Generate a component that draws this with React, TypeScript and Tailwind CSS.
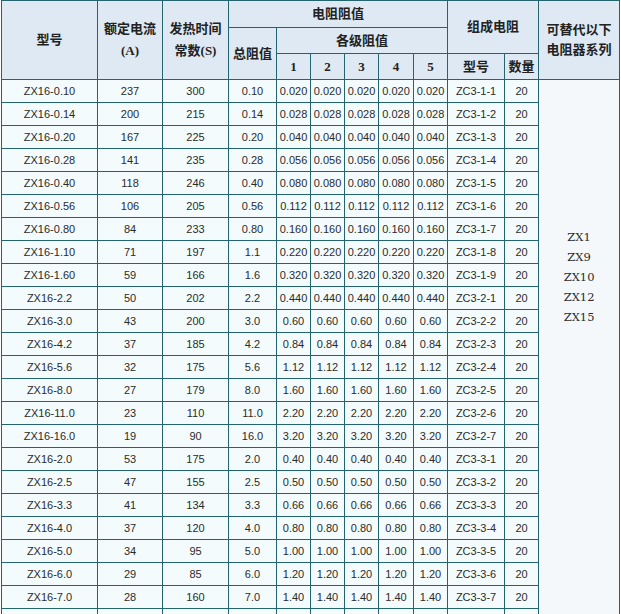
import React from "react";

type Row = [string, string, string, string, string, string, string];

const rows: Row[] = [
  ["ZX16-0.10", "237", "300", "0.10", "0.020", "ZC3-1-1", "20"],
  ["ZX16-0.14", "200", "215", "0.14", "0.028", "ZC3-1-2", "20"],
  ["ZX16-0.20", "167", "225", "0.20", "0.040", "ZC3-1-3", "20"],
  ["ZX16-0.28", "141", "235", "0.28", "0.056", "ZC3-1-4", "20"],
  ["ZX16-0.40", "118", "246", "0.40", "0.080", "ZC3-1-5", "20"],
  ["ZX16-0.56", "106", "205", "0.56", "0.112", "ZC3-1-6", "20"],
  ["ZX16-0.80", "84", "233", "0.80", "0.160", "ZC3-1-7", "20"],
  ["ZX16-1.10", "71", "197", "1.1", "0.220", "ZC3-1-8", "20"],
  ["ZX16-1.60", "59", "166", "1.6", "0.320", "ZC3-1-9", "20"],
  ["ZX16-2.2", "50", "202", "2.2", "0.440", "ZC3-2-1", "20"],
  ["ZX16-3.0", "43", "200", "3.0", "0.60", "ZC3-2-2", "20"],
  ["ZX16-4.2", "37", "185", "4.2", "0.84", "ZC3-2-3", "20"],
  ["ZX16-5.6", "32", "175", "5.6", "1.12", "ZC3-2-4", "20"],
  ["ZX16-8.0", "27", "179", "8.0", "1.60", "ZC3-2-5", "20"],
  ["ZX16-11.0", "23", "110", "11.0", "2.20", "ZC3-2-6", "20"],
  ["ZX16-16.0", "19", "90", "16.0", "3.20", "ZC3-2-7", "20"],
  ["ZX16-2.0", "53", "175", "2.0", "0.40", "ZC3-3-1", "20"],
  ["ZX16-2.5", "47", "155", "2.5", "0.50", "ZC3-3-2", "20"],
  ["ZX16-3.3", "41", "134", "3.3", "0.66", "ZC3-3-3", "20"],
  ["ZX16-4.0", "37", "120", "4.0", "0.80", "ZC3-3-4", "20"],
  ["ZX16-5.0", "34", "95", "5.0", "1.00", "ZC3-3-5", "20"],
  ["ZX16-6.0", "29", "85", "6.0", "1.20", "ZC3-3-6", "20"],
  ["ZX16-7.0", "28", "160", "7.0", "1.40", "ZC3-3-7", "20"],
  ["", "", "", "", "", "", ""],
];

const widths = [96, 65, 66, 48, 34, 34, 34, 35, 34, 57, 34, 81];

const th =
  "border border-[#23646f] bg-[#dfe9f3] text-center align-middle font-bold text-[13px] leading-[20px] text-[#222] p-0";
const td =
  "border border-[#23646f] bg-[#f3fbfd] text-center align-middle text-[11px] text-[#2b2b2b] p-0 whitespace-nowrap";

export default function App() {
  return (
    <div className="w-[621px] h-[614px] overflow-hidden bg-white pl-[1px]">
      <table
        className="border-collapse table-fixed w-[618px]"
        style={{ fontFamily: '"Liberation Serif", "Noto Sans CJK SC", serif' }}
      >
        <colgroup>
          {widths.map((w, i) => (
            <col key={i} style={{ width: w }} />
          ))}
        </colgroup>
        <thead>
          <tr className="h-[27px]">
            <th rowSpan={3} className={th}>
              型号
            </th>
            <th rowSpan={3} className={`${th} leading-[22px]`}>
              额定电流
              <br />
              (A)
            </th>
            <th rowSpan={3} className={`${th} leading-[22px]`}>
              发热时间
              <br />
              常数(S)
            </th>
            <th colSpan={6} className={th}>
              电阻阻值
            </th>
            <th colSpan={2} rowSpan={2} className={th}>
              组成电阻
            </th>
            <th rowSpan={3} className={th}>
              可替代以下
              <br />
              电阻器系列
            </th>
          </tr>
          <tr className="h-[26px]">
            <th rowSpan={2} className={th}>
              总阻值
            </th>
            <th colSpan={5} className={th}>
              各级阻值
            </th>
          </tr>
          <tr className="h-[26px]">
            {["1", "2", "3", "4", "5", "型号", "数量"].map((t) => (
              <th key={t} className={th}>
                {t}
              </th>
            ))}
          </tr>
        </thead>
        <tbody style={{ fontFamily: '"Liberation Sans", "Noto Sans CJK SC", sans-serif' }}>
          {rows.map((r, i) => (
            <tr key={i} className="h-[23px]">
              <td className={td}>{r[0]}</td>
              <td className={td}>{r[1]}</td>
              <td className={td}>{r[2]}</td>
              <td className={td}>{r[3]}</td>
              <td className={td}>{r[4]}</td>
              <td className={td}>{r[4]}</td>
              <td className={td}>{r[4]}</td>
              <td className={td}>{r[4]}</td>
              <td className={td}>{r[4]}</td>
              <td className={td}>{r[5]}</td>
              <td className={td}>{r[6]}</td>
              {i === 0 && (
                <td
                  rowSpan={rows.length}
                  className="border border-[#23646f] bg-[#f4f8fb] text-center align-top pt-[147px] text-[11.5px] leading-[20px] text-[#2b2b2b]"
                  style={{ fontFamily: '"DejaVu Serif", "Liberation Serif", serif' }}
                >
                  ZX1
                  <br />
                  ZX9
                  <br />
                  ZX10
                  <br />
                  ZX12
                  <br />
                  ZX15
                </td>
              )}
            </tr>
          ))}
        </tbody>
      </table>
    </div>
  );
}
